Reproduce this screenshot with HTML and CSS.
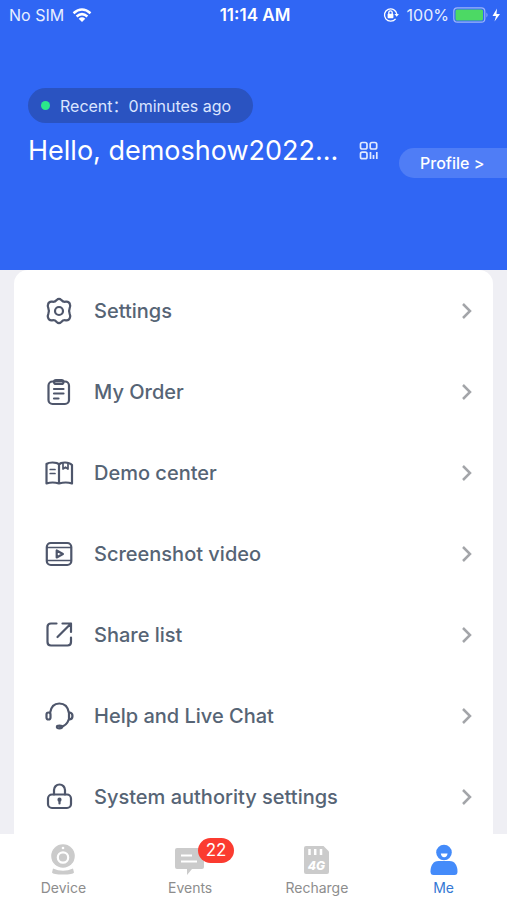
FILE: index.html
```
<!DOCTYPE html>
<html lang="en">
<head>
<meta charset="utf-8">
<meta name="viewport" content="width=device-width, initial-scale=1">
<title>Me</title>
<link rel="stylesheet" href="styles.css">
</head>
<body>
<div class="app">
  <header class="hero">
    <div class="status">
      <div class="status-side">
        <span>No SIM</span>
        <svg width="20" height="15" viewBox="0 0 20 15" fill="none" stroke="#fff" stroke-width="2.5"><path d="M1.5 5.2Q10-2.2 18.500 5.200M4.600 8.500Q10 3.700 15.400 8.500"/><path d="M10 14 6.700 10.700Q10 8 13.300 10.700Z" fill="#fff" stroke="none"/></svg>
      </div>
      <strong class="clock">11:14 AM</strong>
      <div class="status-side status-right">
        <svg width="16" height="16" viewBox="0 0 16 16" fill="none" stroke="#fff" stroke-width="1.300"><path d="M12.600 11.800A6.200 6.200 0 1 1 13.800 7"/><path d="M11.400 7h4.500l-2.200 2.800z" fill="#fff" stroke="none"/><rect x="4.600" y="6.800" width="5.800" height="4.400" rx=".6" fill="#fff" stroke="none"/><path d="M5.800 7V5.600a1.700 1.700 0 0 1 3.400 0V7"/></svg>
        <span>100%</span>
        <svg class="battery" width="48" height="16" viewBox="0 0 48 16"><rect x=".8" y=".8" width="31" height="14.400" rx="3.500" fill="none" stroke="#9bb5f8" stroke-width="1.200"/><rect x="2.500" y="2.500" width="27.500" height="11" rx="1.500" fill="#4cd964"/><path d="M33.500 5.500q2 2.500 0 5z" fill="#9bb5f8"/><path d="M44 1.500 39.500 9H43L41.500 14.500 47 7H43.500z" fill="#fff"/></svg>
      </div>
    </div>
    <div class="recent"><span class="dot"></span><span>Recent：0minutes ago</span></div>
    <div class="identity">
      <h1>Hello, demoshow2022...</h1>
      <button class="qr" aria-label="QR code"><svg width="20" height="20" viewBox="0 0 20 20" fill="none" stroke="#dfe9ff" stroke-width="1.700"><rect x="1.500" y="1.500" width="6.500" height="6.500" rx="1.800"/><rect x="11.200" y="1.500" width="6.500" height="6.500" rx="1.800"/><rect x="1.500" y="11.200" width="6.500" height="6.500" rx="1.800"/><path d="M11.500 11v7M14.500 14v4M17.800 11v7"/></svg></button>
      <a class="profile" href="#profile">Profile &gt;</a>
    </div>
  </header>
  <main class="content">
    <nav class="menu" aria-label="Account">
      <a href="#settings"><svg class="icon" viewBox="0 0 30 30"><path d="M12.700 4Q15 1.700 17.300 4Q19.100 6.200 21.800 5.700Q25.300 5.400 26 8.500Q26.600 10 25.700 12Q24.500 15 25.700 18Q26.600 20 26 21.500Q25.300 24.600 21.800 24.300Q19.100 23.800 17.300 26Q15 28.300 12.700 26Q10.900 23.800 8.200 24.300Q4.700 24.600 4 21.500Q3.400 20 4.300 18Q5.500 15 4.300 12Q3.400 10 4 8.500Q4.700 5.400 8.200 5.700Q10.900 6.200 12.700 4Z"/><circle cx="15" cy="15" r="4"/></svg><span>Settings</span><svg class="chevron" viewBox="0 0 12 18"><path d="m2 2 7 7-7 7"/></svg></a>
      <a href="#orders"><svg class="icon" viewBox="0 0 30 30"><rect x="4.500" y="4.500" width="20.500" height="22.500" rx="4"/><rect x="10" y="3" width="9.500" height="4" rx="2"/><path d="M10 12h9.500M10 16.500h9.500M10 21.500h4.500"/></svg><span>My Order</span><svg class="chevron" viewBox="0 0 12 18"><path d="m2 2 7 7-7 7"/></svg></a>
      <a href="#demo"><svg class="icon" viewBox="0 0 30 30"><path d="M15 6.500Q13.500 4.500 8.500 4.500Q4.500 4.500 2.500 6V25.500Q8.500 23.500 15 25.500Q22 23.500 28 25.500V7Q25.500 4.500 21 4.500Q16.500 4.500 15 6.500V25.500"/><path d="M6.200 11.500H11M6.200 15.500H11M19 5v6l2.500-1.800L24 11V5" stroke-width="1.700"/></svg><span>Demo center</span><svg class="chevron" viewBox="0 0 12 18"><path d="m2 2 7 7-7 7"/></svg></a>
      <a href="#video"><svg class="icon" viewBox="0 0 30 30"><rect x="2.800" y="4" width="24.500" height="22" rx="4"/><path d="M3 8.500h24M3 21.500h24" stroke-width="1.700"/><path d="M12.700 11.500v7l6.200-3.500z"/></svg><span>Screenshot video</span><svg class="chevron" viewBox="0 0 12 18"><path d="m2 2 7 7-7 7"/></svg></a>
      <a href="#share"><svg class="icon" viewBox="0 0 30 30"><path d="M12.500 3.500H7Q3.500 3.500 3.500 7V22Q3.500 25.500 7 25.500H23.500Q27 25.500 27 22V17.500M18.500 3.500H27V12M27 3.500 13.500 17"/></svg><span>Share list</span><svg class="chevron" viewBox="0 0 12 18"><path d="m2 2 7 7-7 7"/></svg></a>
      <a href="#help"><svg class="icon" viewBox="0 0 30 30"><path d="M6 12C7 5.500 10.500 2.500 15.300 2.500S24 5.500 25 12V18C23.500 22.500 20.500 25.500 16 26"/><rect x="2.500" y="11.500" width="4" height="7" rx="2"/><path d="M25 11.500q3.500 0 3.500 3.500T25 18.500"/><ellipse cx="15.500" cy="26" rx="2.600" ry="1.300"/></svg><span>Help and Live Chat</span><svg class="chevron" viewBox="0 0 12 18"><path d="m2 2 7 7-7 7"/></svg></a>
      <a href="#authority"><svg class="icon" viewBox="0 0 30 30"><rect x="4" y="12.500" width="23" height="13.500" rx="4"/><path d="M10 12.500V8a5.500 5.500 0 0 1 11 0V12.500M15.500 17.500v4"/><circle cx="15.500" cy="17.700" r="1"/></svg><span>System authority settings</span><svg class="chevron" viewBox="0 0 12 18"><path d="m2 2 7 7-7 7"/></svg></a>
    </nav>
  </main>
  <nav class="tabs" aria-label="Main">
    <a href="#device"><svg viewBox="0 0 32 32"><circle cx="16" cy="12" r="11.800"/><path d="M6 24.500q10 4.500 20 0l1 4q-1 2-11 2t-11-2z"/><circle cx="16" cy="13.500" r="5.200" fill="none" stroke="#fff" stroke-width="2.200"/><circle cx="16" cy="4" r="1.300" fill="#fff"/></svg><span>Device</span></a>
    <a href="#events"><span class="icon-wrap"><svg viewBox="0 0 32 32"><path d="M3 4H28q2 0 2 2V23q0 2-2 2H18l-5 6v-6H3q-2 0-2-2V6q0-2 2-2z"/><path d="M7 11.500h11M7 17.500h16" stroke="#fff" stroke-width="2"/></svg><b class="badge">22</b></span><span>Events</span></a>
    <a href="#recharge"><svg viewBox="0 0 32 32"><path d="M5 2H22.500L28 7.500V28q0 2-2 2H5q-2 0-2-2V4q0-2 2-2z"/><path d="M8.500 5v6M14.200 5v6M20 5v6" stroke="#fff" stroke-width="2.500"/><text class="sim-text" x="15.500" y="26" text-anchor="middle">4G</text></svg><span>Recharge</span></a>
    <a class="active" href="#me" aria-current="page"><svg viewBox="0 0 32 32"><circle cx="16" cy="8.500" r="7.800"/><path d="M10.500 17H21.500C27 17 29.500 22 29.500 27.500Q29.500 31 26.500 31H5.500Q2.500 31 2.500 27.500C2.500 22 5 17 10.500 17Z"/><path d="M12.800 9.500h6.800q-.5 3.700-3.400 3.700t-3.400-3.700z" fill="#fff"/></svg><span>Me</span></a>
  </nav>
</div>
</body>
</html>
```

FILE: styles.css
```
* { box-sizing: border-box; }

body {
  margin: 0;
  font-family: Inter, "Noto Sans CJK SC", sans-serif;
  background: #efeff4;
}

a { color: inherit; text-decoration: none; }
svg { display: block; flex: none; }

.app { display: flex; flex-direction: column; height: 100vh; }

.hero {
  flex: none;
  padding-bottom: 92px;
  background: #3066f4;
  color: #fff;
}

.status {
  display: grid;
  grid-template-columns: 1fr auto 1fr;
  align-items: center;
  height: 30px;
  padding: 0 6px 0 9px;
  font-family: Inter, sans-serif;
  font-size: 16px;
  color: #e8efff;
}
.status-side { display: flex; align-items: center; gap: 8px; }
.status-right { justify-content: flex-end; }
.battery { margin-left: -4px; }
.clock { font-size: 17px; font-weight: 600; color: #fff; }

.recent {
  display: flex;
  align-items: center;
  gap: 10px;
  width: fit-content;
  height: 35px;
  margin: 58px 0 0 28px;
  padding: 0 22px 0 13px;
  border-radius: 18px;
  background: #2a53c1;
  color: #dbe5ff;
  font-size: 16px;
  line-height: 20px;
}
.dot { width: 9px; height: 9px; border-radius: 50%; background: #2be88b; }

.identity { display: flex; align-items: center; height: 55px; padding-left: 28px; }
h1 { margin: 0; font-size: 27px; font-weight: 400; line-height: 54px; white-space: nowrap; }
.qr { margin-left: auto; padding: 0; border: 0; background: none; }
.profile {
  align-self: flex-end;
  width: 108px;
  height: 30px;
  margin-left: 20px;
  padding-left: 21px;
  border-radius: 15px 0 0 15px;
  background: #4f7df6;
  font-size: 16px;
  font-weight: 500;
  line-height: 30px;
}

.content { flex: 1; min-height: 0; overflow: hidden; padding: 0 14px; }
.menu { border-radius: 14px 14px 0 0; background: #fff; }
.menu a {
  display: flex;
  align-items: center;
  height: 81px;
  padding: 0 20px 0 30px;
  color: #566475;
  font-size: 20px;
  font-weight: 500;
}
.menu span { flex: 1; margin-left: 20px; }
.icon {
  width: 30px;
  height: 30px;
  fill: none;
  stroke: #4e566b;
  stroke-width: 2.2;
  stroke-linecap: round;
  stroke-linejoin: round;
}
.chevron { width: 12px; height: 18px; fill: none; stroke: #a3a5a9; stroke-width: 2.5; }

.tabs {
  display: grid;
  grid-template-columns: repeat(4, 1fr);
  flex: none;
  height: 66px;
  background: #fff;
}
.tabs a {
  display: flex;
  flex-direction: column;
  align-items: center;
  gap: 2px;
  padding-top: 10px;
  color: #8d8d8d;
  font-size: 14px;
  line-height: 20px;
}
.tabs svg { width: 32px; height: 32px; fill: #cbcbcb; }
.tabs .active { color: #3478d4; }
.tabs .active svg { fill: #448bfa; }
.icon-wrap { position: relative; }
.badge {
  position: absolute;
  top: -6px;
  left: 24px;
  width: 36px;
  height: 25px;
  border-radius: 13px;
  background: #fb3b30;
  color: #fff;
  font-size: 17px;
  font-weight: 400;
  line-height: 25px;
  text-align: center;
}
.tabs .sim-text { fill: #fff; font-size: 12px; font-style: italic; font-weight: 800; }
```
